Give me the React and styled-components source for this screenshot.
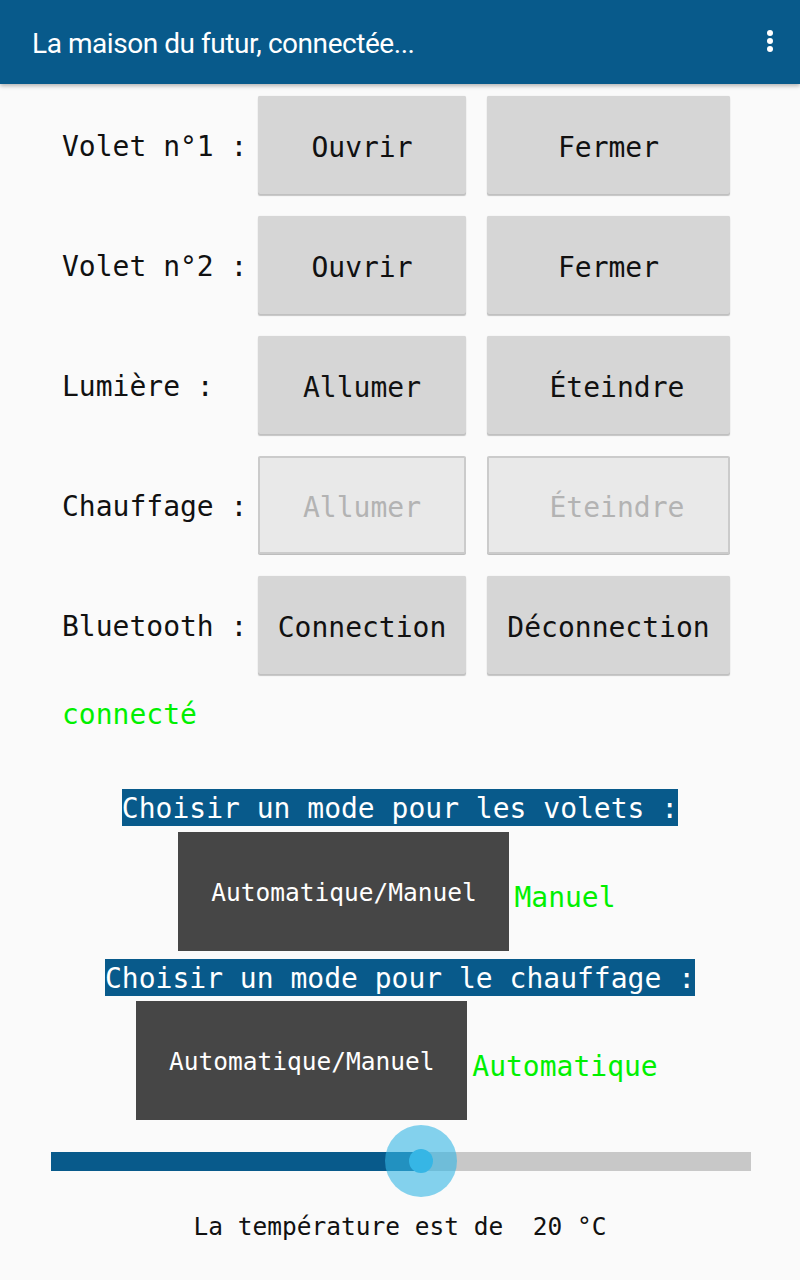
import React from "react";
import styled, { createGlobalStyle } from "styled-components";

const Global = createGlobalStyle`
  html, body {
    margin: 0;
    padding: 0;
    background: #fafafa;
  }
  body {
    min-height: 1280px;
    font-family: "DejaVu Sans Mono", "Liberation Mono", monospace;
  }
`;

const Page = styled.div`
  width: 800px;
  min-height: 1280px;
  background: #fafafa;
`;

const AppBar = styled.header`
  height: 84px;
  background: #085a8b;
  display: flex;
  align-items: center;
  justify-content: space-between;
  padding: 0 27px 0 32px;
  box-shadow: 0 2px 4px rgba(0, 0, 0, 0.28);
  position: relative;
  z-index: 1;
`;

const Title = styled.h1`
  margin: 0;
  padding-top: 2px;
  font-family: Roboto, "Noto Sans", sans-serif;
  font-weight: 400;
  font-size: 28px;
  letter-spacing: -0.45px;
  color: #fff;
`;

const Overflow = styled.div`
  display: flex;
  flex-direction: column;
  gap: 2px;
  padding-bottom: 2px;
`;

const Dot = styled.span`
  width: 6px;
  height: 6px;
  border-radius: 50%;
  background: #fff;
`;

const Content = styled.main`
  padding: 12px 0 0 62px;
`;

const Grid = styled.div`
  display: grid;
  grid-template-columns: 175px 208px 243px;
  column-gap: 21px;
  row-gap: 22px;
  align-items: center;
`;

const Label = styled.span`
  font-size: 28px;
  color: #111;
  white-space: pre;
  padding-top: 3px;
`;

const Button = styled.button`
  height: 98px;
  font-family: "DejaVu Sans Mono", "Liberation Mono", monospace;
  font-size: 28px;
  white-space: pre;
  border-radius: 2px;
  padding: 4px 0 0;
  cursor: pointer;
  color: ${(p) => (p.disabled ? "#b3b3b3" : "#111")};
  background: ${(p) => (p.disabled ? "#e9e9e9" : "#d6d6d6")};
  border: ${(p) => (p.disabled ? "2px solid #cbcbcb" : "none")};
  box-shadow: ${(p) =>
    p.disabled
      ? "0 1px 0 #bdbdbd"
      : "0 2px 1px rgba(0,0,0,0.22), 0 0 1px rgba(0,0,0,0.18)"};
`;

const Status = styled.div`
  margin-top: 22px;
  font-size: 28px;
  line-height: 37px;
  color: #00f000;
`;

const Modes = styled.section`
  margin-top: 56px;
  display: flex;
  flex-direction: column;
  align-items: center;
`;

const Heading = styled.div`
  margin-top: ${(p) => p.$top || 0}px;
  background: #085a8b;
  color: #fff;
  font-size: 28px;
  line-height: 37px;
  padding-top: 1px;
  height: 37px;
  box-sizing: border-box;
  white-space: pre;
`;

const ModeRow = styled.div`
  margin-top: ${(p) => p.$top}px;
  display: flex;
  align-items: center;
  gap: 5px;
  padding-right: 6px;
`;

const DarkButton = styled.button`
  width: 331px;
  height: 119px;
  border: none;
  border-radius: 0;
  background: #464646;
  color: #fff;
  font-family: "DejaVu Sans Mono", "Liberation Mono", monospace;
  font-size: 24.5px;
  padding: 2px 0 0;
`;

const ModeValue = styled.span`
  font-size: 28px;
  color: #00f000;
  padding-top: 12px;
`;

const Slider = styled.div`
  margin: 5px 0 0 51px;
  width: 700px;
  height: 72px;
  display: flex;
  align-items: center;
  position: relative;
`;

const Track = styled.div`
  width: 100%;
  height: 19px;
  background: #c8c8c8;
  display: flex;
`;

const Fill = styled.div`
  height: 100%;
  background: #085a8b;
`;

const Thumb = styled.div`
  position: absolute;
  top: 0;
  width: 72px;
  height: 72px;
  margin-left: -36px;
  border-radius: 50%;
  background: rgba(51, 181, 229, 0.6);
  display: flex;
  align-items: center;
  justify-content: center;
  filter: blur(0.6px);

  &::after {
    content: "";
    width: 24px;
    height: 24px;
    border-radius: 50%;
    background: #36b6e5;
  }
`;

const Temperature = styled.p`
  margin: 14px 0 0;
  text-align: center;
  font-size: 24.5px;
  line-height: 32px;
  color: #111;
  white-space: pre;
`;

const rows = [
  { label: "Volet n°1 :", a: "Ouvrir", b: "Fermer" },
  { label: "Volet n°2 :", a: "Ouvrir", b: "Fermer" },
  { label: "Lumière :", a: "Allumer", b: " Éteindre" },
  { label: "Chauffage :", a: "Allumer", b: " Éteindre", disabled: true },
  { label: "Bluetooth :", a: "Connection", b: "Déconnection" },
];

export default function App() {
  const value = 0.529;
  return (
    <Page>
      <Global />
      <AppBar>
        <Title>La maison du futur, connectée...</Title>
        <Overflow>
          <Dot />
          <Dot />
          <Dot />
        </Overflow>
      </AppBar>
      <Content>
        <Grid>
          {rows.map((r) => (
            <React.Fragment key={r.label}>
              <Label>{r.label}</Label>
              <Button disabled={r.disabled}>{r.a}</Button>
              <Button disabled={r.disabled}>{r.b}</Button>
            </React.Fragment>
          ))}
        </Grid>
        <Status>connecté</Status>
      </Content>
      <Modes>
        <Heading>Choisir un mode pour les volets :</Heading>
        <ModeRow $top={6}>
          <DarkButton>Automatique/Manuel</DarkButton>
          <ModeValue>Manuel</ModeValue>
        </ModeRow>
        <Heading $top={8}>Choisir un mode pour le chauffage :</Heading>
        <ModeRow $top={5}>
          <DarkButton>Automatique/Manuel</DarkButton>
          <ModeValue>Automatique</ModeValue>
        </ModeRow>
      </Modes>
      <Slider>
        <Track>
          <Fill style={{ width: `${value * 100}%` }} />
        </Track>
        <Thumb style={{ left: `${value * 100}%` }} />
      </Slider>
      <Temperature>La température est de  20 °C</Temperature>
    </Page>
  );
}
